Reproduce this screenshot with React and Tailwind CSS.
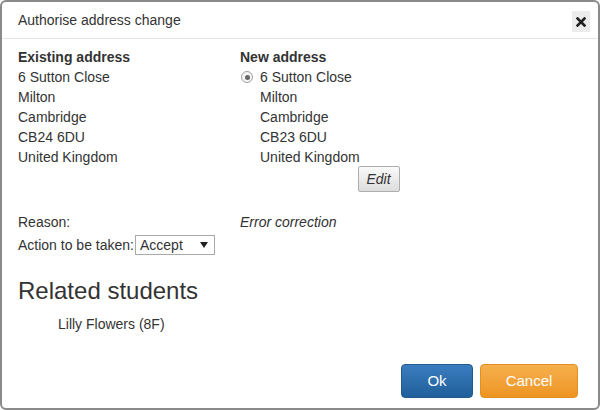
export default function App() {
  const existing = ["6 Sutton Close", "Milton", "Cambridge", "CB24 6DU", "United Kingdom"];
  const next = ["Milton", "Cambridge", "CB23 6DU", "United Kingdom"];

  return (
    <div
      className="w-[600px] h-[410px] bg-white text-[#333] text-[14px] leading-[20px]"
      style={{ fontFamily: '"Liberation Sans", Arial, sans-serif' }}
    >
      <div className="w-full h-full border-2 border-[#8a8a8a] rounded-[6px] flex flex-col">
        {/* HEADER */}
        <div className="h-[37px] border-b border-[#e5e5e5] flex items-center justify-between pl-[16px] pr-[6px]">
          <span className="text-[14px]">Authorise address change</span>
          <button className="w-[18px] h-[21px] bg-[#ececec] flex items-center justify-center mt-[3px] mr-[2px]">
            <svg width="10" height="10" viewBox="0 0 10 10">
              <path d="M1.5 1.5 L8.5 8.5 M8.5 1.5 L1.5 8.5" stroke="#222" strokeWidth="2.6" strokeLinecap="square" />
            </svg>
          </button>
        </div>

        {/* BODY */}
        <div className="flex-1 pl-[16px] pr-[16px] pt-[8px] flex flex-col">
          <div className="flex">
            <div className="w-[222px]">
              <div className="font-bold">Existing address</div>
              {existing.map(l => (
                <div key={l}>{l}</div>
              ))}
            </div>
            <div className="flex flex-col">
              <div className="font-bold">New address</div>
              <div className="flex items-center">
                <span className="w-[12px] h-[12px] rounded-full border border-[#a0a0a0] bg-[#f4f4f4] flex items-center justify-center ml-[1px] mr-[7px]">
                  <span className="w-[5px] h-[5px] rounded-full bg-[#666]" />
                </span>
                <span>6 Sutton Close</span>
              </div>
              {next.map(l => (
                <div key={l} className="pl-[20px]">{l}</div>
              ))}
              <div className="flex justify-end -mt-[1px]">
                <button className="h-[26px] px-[8px] border border-[#adadad] rounded-[2px] bg-gradient-to-b from-[#fafafa] to-[#dcdcdc] italic text-[14px] -mr-[40px]">
                  Edit
                </button>
              </div>
            </div>
          </div>

          <div className="flex mt-[20px]">
            <div className="w-[222px]">Reason:</div>
            <div className="italic">Error correction</div>
          </div>
          <div className="flex items-center mt-[3px]">
            <span>Action to be taken:</span>
            <div className="w-[80px] h-[20px] border border-[#a9a9a9] flex items-center justify-between pl-[4px] pr-[6px] ml-[1px]">
              <span>Accept</span>
              <svg width="8" height="6" viewBox="0 0 8 6">
                <path d="M0 0 L8 0 L4 6 Z" fill="#222" />
              </svg>
            </div>
          </div>

          <div className="text-[24px] leading-[28px] mt-[22px]">Related students</div>
          <div className="pl-[40px] mt-[9px]">Lilly Flowers (8F)</div>

          <div className="flex-1" />
          <div className="flex justify-end gap-[7px] pb-[10px] pr-[4px]">
            <button className="w-[72px] h-[34px] rounded-[4px] border border-[#245a8c] bg-gradient-to-b from-[#3a7dbf] to-[#1f5f9a] text-white text-[15px]">
              Ok
            </button>
            <button className="w-[98px] h-[34px] rounded-[4px] border border-[#e09020] bg-gradient-to-b from-[#f6b04c] to-[#ee9420] text-white text-[15px]">
              Cancel
            </button>
          </div>
        </div>
      </div>
    </div>
  );
}
